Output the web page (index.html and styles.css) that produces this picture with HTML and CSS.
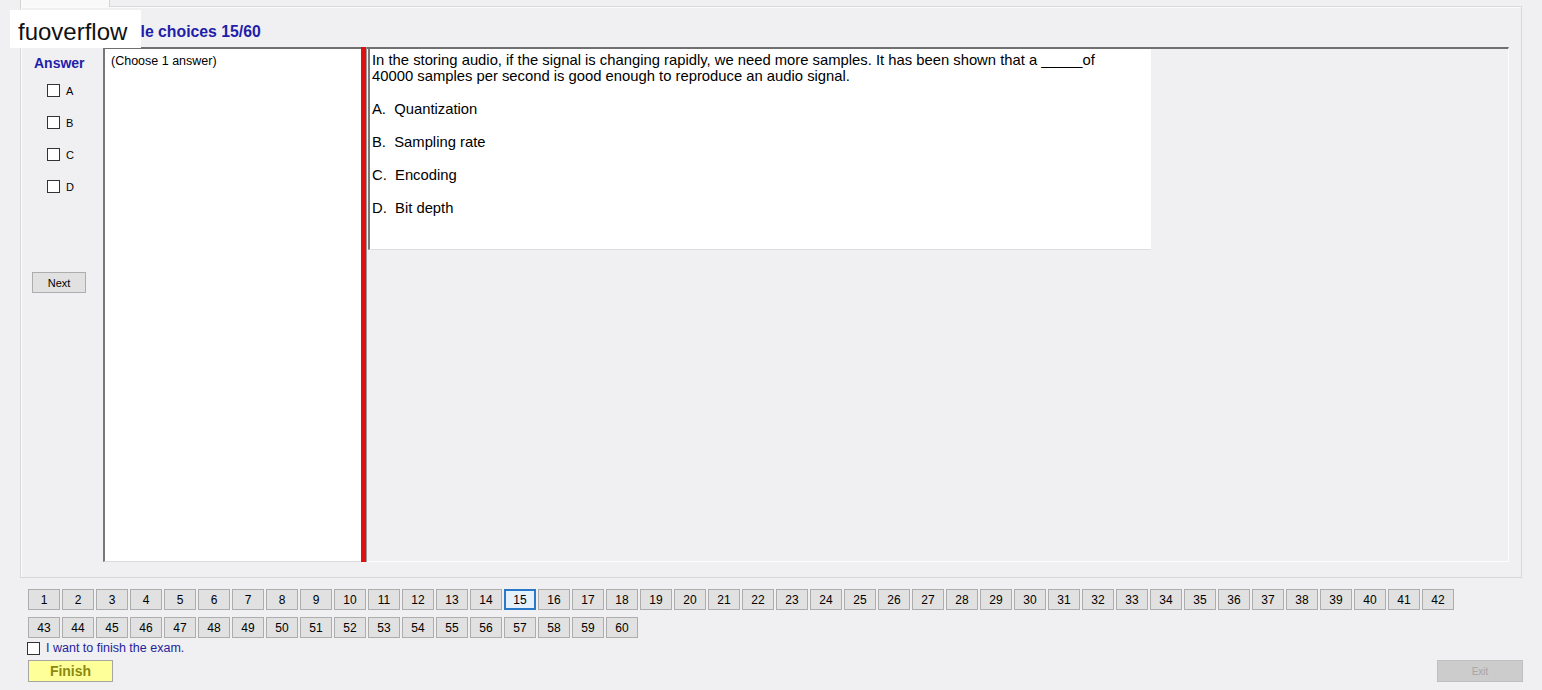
FILE: index.html
```html
<!DOCTYPE html>
<html lang="en">
<head>
    <meta charset="UTF-8">
    <title>Exam</title>
    <link rel="stylesheet" href="styles.css">
</head>
<body>
    <div class="tab-strip"><span class="tab"></span></div>
    <div class="tab-page">
        <div class="group-title">Multiple choices 15/60</div>
        <div class="split">
            <div class="answer-panel">
                <div class="answer-title">Answer</div>
                <label class="opt"><span class="box"></span>A</label>
                <label class="opt"><span class="box"></span>B</label>
                <label class="opt"><span class="box"></span>C</label>
                <label class="opt"><span class="box"></span>D</label>
                <button class="btn next">Next</button>
            </div>
            <div class="hint-box">(Choose 1 answer)</div>
            <div class="splitter"></div>
            <div class="question-panel">
                <div class="question-box">
                    <p class="q-text">In the storing audio, if the signal is changing rapidly, we need more samples. It has been shown that a _____of<br>40000 samples per second is good enough to reproduce an audio signal.</p>
                    <p class="q-opt">A.&nbsp;&nbsp;Quantization</p>
                    <p class="q-opt">B.&nbsp;&nbsp;Sampling rate</p>
                    <p class="q-opt">C.&nbsp;&nbsp;Encoding</p>
                    <p class="q-opt">D.&nbsp;&nbsp;Bit depth</p>
                </div>
            </div>
        </div>
    </div>

    <div class="nav">
        <div class="nav-row">
            <button class="num">1</button><button class="num">2</button><button class="num">3</button><button class="num">4</button><button class="num">5</button><button class="num">6</button><button class="num">7</button><button class="num">8</button><button class="num">9</button><button class="num">10</button><button class="num">11</button><button class="num">12</button><button class="num">13</button><button class="num">14</button><button class="num current">15</button><button class="num">16</button><button class="num">17</button><button class="num">18</button><button class="num">19</button><button class="num">20</button><button class="num">21</button><button class="num">22</button><button class="num">23</button><button class="num">24</button><button class="num">25</button><button class="num">26</button><button class="num">27</button><button class="num">28</button><button class="num">29</button><button class="num">30</button><button class="num">31</button><button class="num">32</button><button class="num">33</button><button class="num">34</button><button class="num">35</button><button class="num">36</button><button class="num">37</button><button class="num">38</button><button class="num">39</button><button class="num">40</button><button class="num">41</button><button class="num">42</button>
        </div>
        <div class="nav-row">
            <button class="num">43</button><button class="num">44</button><button class="num">45</button><button class="num">46</button><button class="num">47</button><button class="num">48</button><button class="num">49</button><button class="num">50</button><button class="num">51</button><button class="num">52</button><button class="num">53</button><button class="num">54</button><button class="num">55</button><button class="num">56</button><button class="num">57</button><button class="num">58</button><button class="num">59</button><button class="num">60</button>
        </div>
    </div>

    <label class="finish-check"><span class="box"></span>I want to finish the exam.</label>
    <div class="bottom-bar">
        <button class="finish">Finish</button>
        <button class="exit" disabled>Exit</button>
    </div>

    <div class="watermark">fuoverflow</div>
</body>
</html>
```

FILE: styles.css
```css
body {
    font-family: 'Liberation Sans', Arial, sans-serif;
    margin: 0;
    padding: 0;
    background: #f0eff1;
    color: #000;
    width: 1542px;
    height: 690px;
    overflow: hidden;
    position: relative;
}
button {
    font-family: inherit;
    padding: 0;
    cursor: default;
}
.tab-strip {
    height: 6px;
    padding-left: 20px;
}
.tab {
    display: block;
    width: 90px;
    height: 7px;
    background: #f9f9f9;
    border-left: 1px solid #d4d4d4;
    border-right: 1px solid #d4d4d4;
    box-sizing: border-box;
    position: relative;
    z-index: 1;
}
.tab-page {
    margin-left: 20px;
    width: 1502px;
    height: 572px;
    border: 1px solid #d8d8d8;
    box-shadow: inset 1px 1px 0 #fbfbfb;
    box-sizing: border-box;
}
.group-title {
    margin-top: 15px;
    padding-left: 73px;
    font-size: 15.8px;
    line-height: 19px;
    font-weight: bold;
    color: #1e1eaa;
}
.split {
    display: flex;
    margin: 6px 0 0 7px;
    width: 1481px;
    height: 515px;
}
.answer-panel {
    width: 75px;
    flex: none;
    padding: 8px 0 0 6px;
    box-sizing: border-box;
}
.answer-title {
    font-size: 14px;
    line-height: 16px;
    font-weight: bold;
    color: #1e1eaa;
}
.box {
    display: inline-block;
    width: 11px;
    height: 11px;
    border: 1px solid #333;
    background: #fff;
    flex: none;
}
.opt {
    display: flex;
    align-items: center;
    gap: 6px;
    height: 13px;
    margin: 19px 0 0 13px;
    font-size: 11px;
}
.answer-title + .opt {
    margin-top: 13px;
}
.btn {
    display: block;
    background: #e1e1e1;
    border: 1px solid #adadad;
    font-size: 11px;
    color: #000;
}
.next {
    width: 54px;
    height: 21px;
    margin: 79px 0 0 -2px;
}
.hint-box {
    width: 258px;
    flex: none;
    background: #fff;
    border-top: 2px solid #707070;
    border-left: 2px solid #777;
    border-bottom: 1px solid #dcdcdc;
    box-sizing: border-box;
    padding: 5px 6px;
    font-size: 12.5px;
    line-height: 15px;
}
.splitter {
    width: 6px;
    flex: none;
    background: #e11010;
    border-right: 1px solid #9a9a9a;
    box-sizing: border-box;
}
.question-panel {
    flex: 1;
    border-top: 2px solid #707070;
    border-right: 1px solid #fcfcfc;
    border-bottom: 1px solid #fcfcfc;
    box-sizing: border-box;
}
.question-box {
    width: 783px;
    height: 201px;
    margin-left: 1px;
    background: #fff;
    border-left: 2px solid #7a7a7a;
    border-bottom: 1px solid #dedede;
    box-sizing: border-box;
    padding: 3px 0 0 2px;
    font-size: 14.8px;
    line-height: 16px;
}
.question-box p {
    margin: 0;
}
.question-box .q-opt {
    margin-top: 17px;
}
.nav {
    margin: 11px 0 0 28px;
}
.nav-row {
    display: flex;
    gap: 2px;
    margin-bottom: 7px;
}
.num {
    width: 32px;
    height: 21px;
    background: #e1e1e1;
    border: 1px solid #adadad;
    font-size: 12px;
    color: #000;
}
.num.current {
    background: #e5f1fb;
    border: 2px solid #2a78c8;
}
.finish-check {
    display: flex;
    align-items: center;
    gap: 6px;
    margin: -4px 0 0 27px;
    height: 14px;
    font-size: 12.5px;
    color: #24249a;
}
.bottom-bar {
    display: flex;
    justify-content: space-between;
    margin-top: 5px;
    padding: 0 19px 0 28px;
}
.finish {
    width: 85px;
    height: 22px;
    background: #ffff99;
    border: 1px solid #a5a5a5;
    font-size: 14px;
    font-weight: bold;
    color: #8a8a10;
}
.exit {
    width: 86px;
    height: 22px;
    background: #cccccc;
    border: 1px solid #bfbfbf;
    font-size: 10px;
    color: #a6a6a6;
}
.watermark {
    position: absolute;
    left: 10px;
    top: 10px;
    width: 131px;
    height: 38px;
    box-sizing: border-box;
    padding: 6px 0 0 8px;
    background: #fff;
    font-size: 24px;
    line-height: 32px;
    color: #111;
}
```
